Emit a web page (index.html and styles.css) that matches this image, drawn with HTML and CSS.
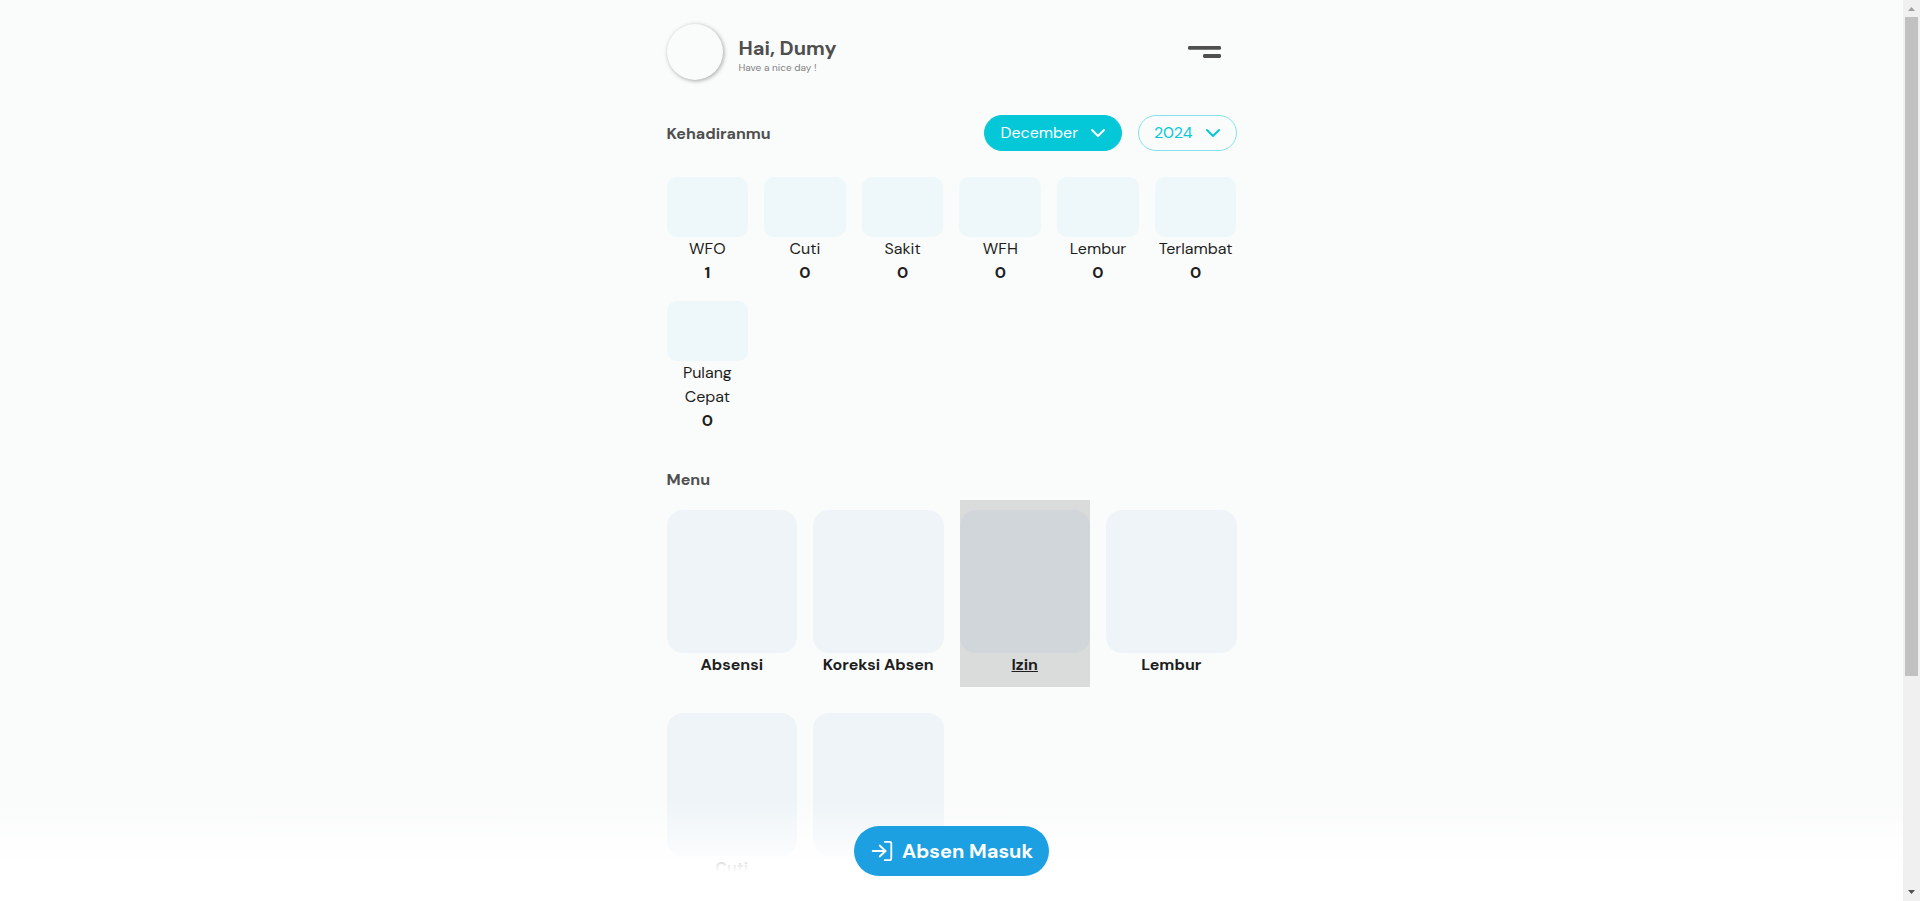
FILE: index.html
```html
<!DOCTYPE html>
<html lang="id">
<head>
<meta charset="utf-8">
<title>Absensi</title>
<link rel="stylesheet" href="styles.css">
</head>
<body>
<div class="viewport">
  <main class="page">
    <div class="container">
      <header class="header">
        <div class="avatar"></div>
        <div class="greeting">
          <h1 class="greeting-name">Hai, Dumy</h1>
          <p class="greeting-note">Have a nice day !</p>
        </div>
        <svg class="burger" width="33" height="12" viewBox="0 0 33 12"><rect width="33" height="3.8" rx="1.4"/><rect x="15" y="8.1" width="18" height="3.8" rx="1.4"/></svg>
      </header>
      <section class="filters">
        <h2 class="title">Kehadiranmu</h2>
        <div class="select select-month"><span>December</span><svg class="chevron" width="16" height="16" viewBox="0 0 16 16"><path d="m2 5 6 6 6-6"/></svg></div>
        <div class="select select-year"><span>2024</span><svg class="chevron" width="16" height="16" viewBox="0 0 16 16"><path d="m2 5 6 6 6-6"/></svg></div>
      </section>
      <section class="stats">
        <div class="stat"><div class="stat-box"></div><span>WFO</span><b>1</b></div>
        <div class="stat"><div class="stat-box"></div><span>Cuti</span><b>0</b></div>
        <div class="stat"><div class="stat-box"></div><span>Sakit</span><b>0</b></div>
        <div class="stat"><div class="stat-box"></div><span>WFH</span><b>0</b></div>
        <div class="stat"><div class="stat-box"></div><span>Lembur</span><b>0</b></div>
        <div class="stat"><div class="stat-box"></div><span>Terlambat</span><b>0</b></div>
        <div class="stat"><div class="stat-box"></div><span>Pulang Cepat</span><b>0</b></div>
      </section>
      <h2 class="title title-menu">Menu</h2>
      <section class="menu">
        <div class="tile"><div class="tile-box"></div><span>Absensi</span></div>
        <div class="tile"><div class="tile-box"></div><span>Koreksi Absen</span></div>
        <div class="tile tile-active"><div class="tile-box"></div><span>Izin</span></div>
        <div class="tile"><div class="tile-box"></div><span>Lembur</span></div>
        <div class="tile"><div class="tile-box"></div><span>Cuti</span></div>
        <div class="tile"><div class="tile-box"></div></div>
      </section>
    </div>
    <div class="footer">
      <div class="checkin">
        <svg class="checkin-icon" width="24" height="24" viewBox="0 0 24 24"><path d="M13.7 2.8h5a1.6 1.6 0 0 1 1.6 1.6v15.2a1.6 1.6 0 0 1-1.6 1.6h-5M1.7 12h13M8.7 6.5l5.8 5.5-5.8 5.5"/></svg>
        <span>Absen Masuk</span>
      </div>
    </div>
  </main>
  <div class="scrollbar">
    <svg class="arrow arrow-up" width="7" height="4" viewBox="0 0 7 4"><path d="M0 4 3.5 0 7 4z"/></svg>
    <div class="thumb"></div>
    <svg class="arrow arrow-down" width="7" height="4" viewBox="0 0 7 4"><path d="M0 0h7L3.5 4z"/></svg>
  </div>
</div>
</body>
</html>
```
FILE: styles.css
```css
* { box-sizing: border-box; }
body { margin: 0; font: 400 16px/24px "DM Sans", Inter, sans-serif; color: #1e1e1e; overflow: hidden; }
h1, h2, p { margin: 0; }
.viewport { display: flex; height: 901px; overflow: hidden; }
.page { flex: 1; position: relative; height: 901px; overflow: hidden; background: #fafcfb; }
.container { width: 570px; margin: 0 auto; padding-top: 23px; }
.header { display: flex; align-items: center; height: 57px; }
.avatar { width: 56px; height: 56px; border-radius: 50%; box-shadow: 1px 1px 4px rgba(0,0,0,.35); }
.greeting { flex: 1; padding: 7px 0 0 16px; }
.greeting-name { font-size: 20px; line-height: 24px; font-weight: 700; color: #4f4f4f; }
.greeting-note { font-size: 10px; line-height: 15px; color: #828282; }
.burger { margin-right: 16px; fill: #4f4f4f; }
.filters { display: flex; align-items: center; height: 36px; margin-top: 35px; }
.title { font-size: 16px; line-height: 24px; font-weight: 700; color: #4f4f4f; white-space: nowrap; }
.filters .title { flex: 1; padding-top: 2px; }
.select { display: flex; align-items: center; justify-content: space-between; height: 36px; border-radius: 18px; padding: 0 15px 0 16px; border: 1px solid #04c8d8; }
.select-month { width: 138px; background: #04c8d8; color: #fff; }
.select-year { width: 99px; margin-left: 16px; padding-left: 15.5px; color: #04c8d8; border-color: #84e2ea; }
.chevron { fill: none; stroke: currentColor; stroke-width: 2; stroke-linecap: round; stroke-linejoin: round; }
.stats { display: grid; grid-template-columns: repeat(6, 1fr); gap: 16px; margin-top: 26px; }
.stat { min-width: 0; display: flex; flex-direction: column; align-items: center; text-align: center; }
.stat-box { width: 100%; height: 60px; border-radius: 10px; background: #eef7fa; }
.stat b { font-weight: 700; }
.title-menu { margin-top: 35px; }
.menu { display: grid; grid-template-columns: repeat(4, 1fr); gap: 16px; margin-top: 8px; }
.tile { height: 187px; padding: 10px 0; text-align: center; font-weight: 700; white-space: nowrap; }
.tile-box { height: 143px; border-radius: 16px; background: #eef4f8; }
.tile-active { background: #dadcdb; text-decoration: underline; }
.tile-active .tile-box { background: #d1d6da; }
.footer { position: absolute; left: 0; right: 0; bottom: 0; height: 101px; padding-top: 26px; background: linear-gradient(rgba(255,255,255,0), #fff 72px); }
.checkin { display: flex; align-items: center; gap: 7px; width: 195px; height: 50px; margin: 0 auto; padding-left: 17px; border-radius: 25px; background: #1ca0e2; color: #fff; font-size: 20px; font-weight: 700; white-space: nowrap; }
.checkin-icon { fill: none; stroke: #fff; stroke-width: 1.8; stroke-linecap: round; stroke-linejoin: round; flex: none; }
.scrollbar { width: 17px; height: 901px; display: flex; flex-direction: column; align-items: center; background: #f0f0f0; }
.arrow { flex: none; }
.arrow-up { margin-top: 7px; fill: #a0a0a0; }
.thumb { width: 13px; height: 659px; margin-top: 6px; background: #c1c1c1; }
.arrow-down { margin: auto 0 7px; fill: #505050; }
```
